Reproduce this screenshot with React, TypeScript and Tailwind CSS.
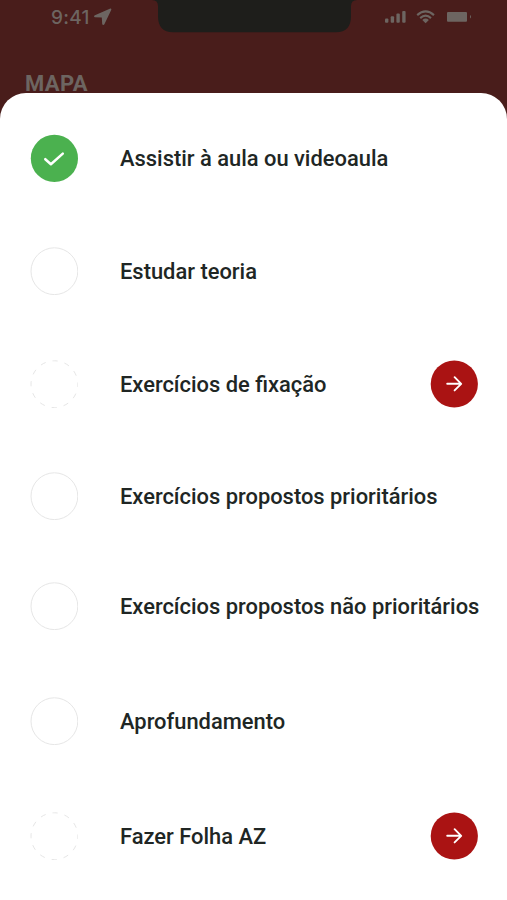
import React from 'react';

type StepStatus = 'done' | 'pending' | 'optional';

interface Step {
  title: string;
  status: StepStatus;
  hasLink?: boolean;
  spacing: string;
}

const steps: Step[] = [
  { title: 'Assistir à aula ou videoaula', status: 'done', spacing: 'mt-[41px]' },
  { title: 'Estudar teoria', status: 'pending', spacing: 'mt-[65px]' },
  { title: 'Exercícios de fixação', status: 'optional', hasLink: true, spacing: 'mt-[65px]' },
  { title: 'Exercícios propostos prioritários', status: 'pending', spacing: 'mt-16' },
  { title: 'Exercícios propostos não prioritários', status: 'pending', spacing: 'mt-[62px]' },
  { title: 'Aprofundamento', status: 'pending', spacing: 'mt-[67px]' },
  { title: 'Fazer Folha AZ', status: 'optional', hasLink: true, spacing: 'mt-[67px]' },
];

function StatusCircle({ status }: { status: StepStatus }) {
  if (status === 'done') {
    return (
      <svg className="size-12 shrink-0" viewBox="0 0 48 48" fill="none">
        <circle cx="24.4" cy="24.4" r="23.6" fill="#4bb14f" />
        <path d="M15.3 25.2L20.9 30.2L32.8 19.6" stroke="#fff" strokeWidth="2.5" strokeLinecap="round" strokeLinejoin="round" />
      </svg>
    );
  }

  return (
    <svg className="size-12 shrink-0" viewBox="0 0 48 48" fill="none">
      <circle
        cx="24.4"
        cy="24.2"
        r="23.4"
        stroke="#e6e6e6"
        strokeWidth="1"
        strokeDasharray={status === 'optional' ? '5.25 7' : undefined}
        strokeDashoffset={status === 'optional' ? 2.6 : undefined}
      />
    </svg>
  );
}

function ArrowButton() {
  return (
    <button className="ml-auto size-12 shrink-0">
      <svg className="size-12" viewBox="0 0 48 48" fill="none">
        <circle cx="24.3" cy="24" r="23.6" fill="#aa1313" />
        <path d="M17.2 23.8H31M24.6 17.2L31.2 23.8L24.6 30.4" stroke="#fff" strokeWidth="1.9" strokeLinecap="round" strokeLinejoin="round" />
      </svg>
    </button>
  );
}

function StatusBar() {
  return (
    <div className="relative flex h-[34px] items-center justify-between pr-9 pl-[51px] text-[#6d6561]">
      <div className="flex items-center gap-1">
        <span className="w-[39px] font-['Inter'] text-[19px] leading-none font-medium tracking-[0.3px] whitespace-nowrap">9:41</span>
        <svg className="size-[18px]" viewBox="0 0 18 18" fill="currentColor">
          <path d="M15.8 .7L.9 7.3C-.3 8 -.2 9.2 1 9.3L7.8 9.5L8.2 15.9C8.4 17.3 9.9 17.4 10.4 16.2L17.2 2C17.7 .8 16.9 .2 15.8 .7Z" />
        </svg>
      </div>

      {/* Notch */}
      <svg className="absolute top-0 left-[152px] h-[33px] w-[206px]" viewBox="0 0 206 33" fill="#1e1e1b">
        <path d="M0 0Q6 0 6 6V16Q6 32.3 21 32.3H184Q199 32.3 199 16V6Q199 0 205 0Z" />
      </svg>

      <svg className="h-[14px] w-[86px]" viewBox="0 0 86 14" fill="none">
        <g fill="currentColor">
          <rect x="0" y="8.5" width="3.4" height="4.2" rx="1" />
          <rect x="5.7" y="6.2" width="3.4" height="6.5" rx="1" />
          <rect x="11.4" y="3.6" width="3.4" height="9.1" rx="1" />
          <rect x="17.2" y="1" width="3.4" height="11.7" rx="1" />
          <path d="M40.6 13.2L37.3 9.9Q40.6 7.2 43.9 9.9Z" />
          <rect x="62" y="2" width="20" height="9.8" rx="1" />
          <path d="M85 5V8.6Q86 8 86 6.8T85 5Z" />
        </g>
        <path d="M32.2 5.1Q40.6 -2.4 49 5.1M35.2 8.1Q40.6 3.3 46 8.1" stroke="currentColor" strokeWidth="2.1" />
      </svg>
    </div>
  );
}

export default function App() {
  return (
    <div className="flex h-[900px] w-[507px] flex-col overflow-hidden bg-[#491d1b] font-['Roboto',sans-serif]">
      <header className="h-[93px] shrink-0">
        <StatusBar />
        <h1 className="mt-[37px] pl-[25px] text-[22px] leading-[26px] font-bold tracking-[0.4px] text-[#6d6561]">MAPA</h1>
      </header>

      <main className="relative flex-1 rounded-t-[26px] bg-white">
        <ul className="flex flex-col">
          {steps.map((step) => (
            <li key={step.title} className={`flex h-12 items-center pr-[29px] pl-[30px] ${step.spacing}`}>
              <StatusCircle status={step.status} />
              <span className="ml-[42px] pt-0.5 text-[21.9px] leading-7 font-medium whitespace-nowrap text-[#202624]">
                {step.title}
              </span>
              {step.hasLink && <ArrowButton />}
            </li>
          ))}
        </ul>
      </main>
    </div>
  );
}
